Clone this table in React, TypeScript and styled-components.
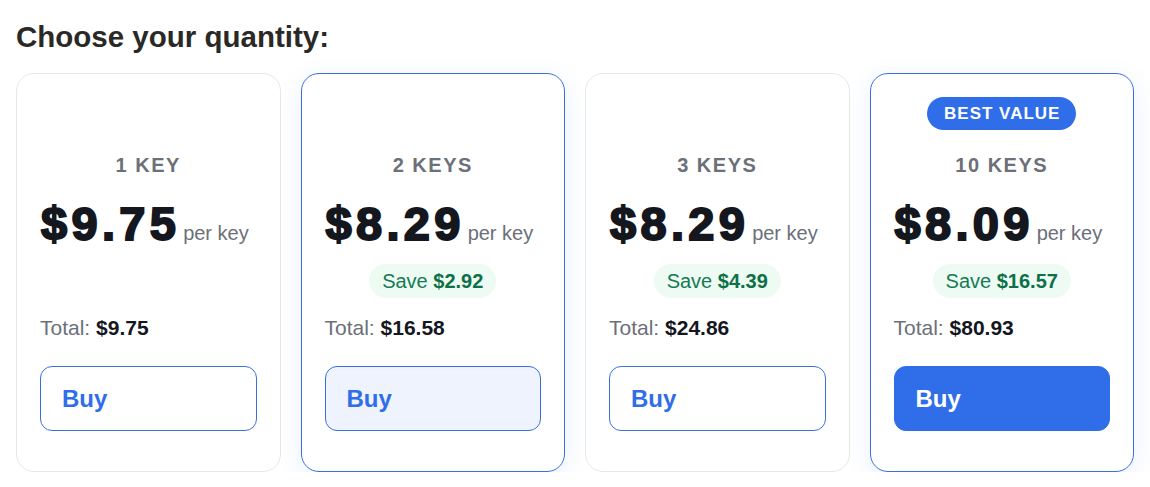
import React from "react";
import styled, { createGlobalStyle, css } from "styled-components";

const GlobalStyle = createGlobalStyle`
  * { box-sizing: border-box; }
  html, body { margin: 0; padding: 0; background: #ffffff; }
  body { font-family: "Liberation Sans", Arial, sans-serif; }
`;

const BLUE = "#2f6ee8";
const BORDER_BLUE = "#3a70dc";

const Page = styled.div`
  padding: 19px 16px 0 16px;
`;

const Heading = styled.h2`
  margin: 0 0 19px 0;
  font-size: 29.5px;
  line-height: 1.2;
  font-weight: 700;
  color: #2a2927;
`;

const Grid = styled.div`
  display: grid;
  grid-template-columns: repeat(4, 1fr);
  gap: 20px;
`;

const Card = styled.div<{ $highlight?: boolean }>`
  display: flex;
  flex-direction: column;
  align-items: center;
  padding: 23px 23px 40px 23px;
  border-radius: 18px;
  background: #ffffff;
  border: 1px solid #e5e7eb;
  ${(p) =>
    p.$highlight &&
    css`
      border-color: ${BORDER_BLUE};
      box-shadow: 0 6px 24px rgba(47, 110, 232, 0.11);
    `}
`;

const BadgeSlot = styled.div`
  height: 33px;
  display: flex;
  justify-content: center;
`;

const Badge = styled.span`
  display: inline-block;
  height: 33px;
  padding: 6px 16px 0 17px;
  border-radius: 17px;
  background: ${BLUE};
  color: #ffffff;
  font-size: 17px;
  line-height: 21px;
  font-weight: 700;
  letter-spacing: 1px;
`;

const Label = styled.div`
  margin-top: 23px;
  font-size: 20px;
  line-height: 24px;
  font-weight: 700;
  letter-spacing: 1.5px;
  color: #6b7079;
  text-align: center;
`;

const PriceRow = styled.div`
  margin-top: 24px;
  align-self: stretch;
  display: flex;
  align-items: baseline;
`;

const Price = styled.span`
  font-size: 47px;
  line-height: 45px;
  font-weight: 700;
  letter-spacing: 4.3px;
  color: #15171f;
  -webkit-text-stroke: 2px #15171f;
  padding-left: 1px;
`;

const PerKey = styled.span`
  margin-left: 3px;
  font-size: 20px;
  color: #6b7079;
`;

const SaveSlot = styled.div`
  margin-top: 18px;
  height: 34px;
  display: flex;
  justify-content: center;
`;

const SavePill = styled.span`
  display: inline-block;
  height: 34px;
  padding: 5px 13px 0 13px;
  border-radius: 17px;
  background: #edfbf3;
  color: #157a55;
  font-size: 20px;
  line-height: 24px;

  b {
    font-weight: 700;
    color: #0d7048;
  }
`;

const Total = styled.div`
  margin-top: 17px;
  align-self: stretch;
  font-size: 21px;
  line-height: 25px;
  color: #6b7079;

  b {
    font-weight: 700;
    color: #15171f;
  }
`;

type BuyVariant = "outline" | "soft" | "solid";

const BuyButton = styled.button<{ $variant: BuyVariant }>`
  margin-top: 26px;
  align-self: stretch;
  height: 65px;
  padding: 0 0 0 21px;
  border-radius: 12px;
  border: 1px solid ${BORDER_BLUE};
  font-family: "Liberation Sans", Arial, sans-serif;
  font-size: 24px;
  font-weight: 700;
  text-align: left;
  cursor: pointer;
  color: ${BLUE};
  background: #ffffff;
  ${(p) =>
    p.$variant === "soft" &&
    css`
      background: #eef3fd;
    `}
  ${(p) =>
    p.$variant === "solid" &&
    css`
      background: ${BLUE};
      border-color: ${BLUE};
      color: #ffffff;
    `}
`;

type Plan = {
  label: string;
  price: string;
  save?: string;
  total: string;
  highlight?: boolean;
  badge?: string;
  variant: BuyVariant;
};

const plans: Plan[] = [
  { label: "1 KEY", price: "$9.75", total: "$9.75", variant: "outline" },
  { label: "2 KEYS", price: "$8.29", save: "$2.92", total: "$16.58", highlight: true, variant: "soft" },
  { label: "3 KEYS", price: "$8.29", save: "$4.39", total: "$24.86", variant: "outline" },
  { label: "10 KEYS", price: "$8.09", save: "$16.57", total: "$80.93", highlight: true, badge: "BEST VALUE", variant: "solid" },
];

export default function App() {
  return (
    <>
      <GlobalStyle />
      <Page>
        <Heading>Choose your quantity:</Heading>
        <Grid>
          {plans.map((p) => (
            <Card key={p.label} $highlight={p.highlight}>
              <BadgeSlot>{p.badge && <Badge>{p.badge}</Badge>}</BadgeSlot>
              <Label>{p.label}</Label>
              <PriceRow>
                <Price>{p.price}</Price>
                <PerKey>per key</PerKey>
              </PriceRow>
              <SaveSlot>
                {p.save && (
                  <SavePill>
                    Save <b>{p.save}</b>
                  </SavePill>
                )}
              </SaveSlot>
              <Total>
                Total: <b>{p.total}</b>
              </Total>
              <BuyButton $variant={p.variant}>Buy</BuyButton>
            </Card>
          ))}
        </Grid>
      </Page>
    </>
  );
}
